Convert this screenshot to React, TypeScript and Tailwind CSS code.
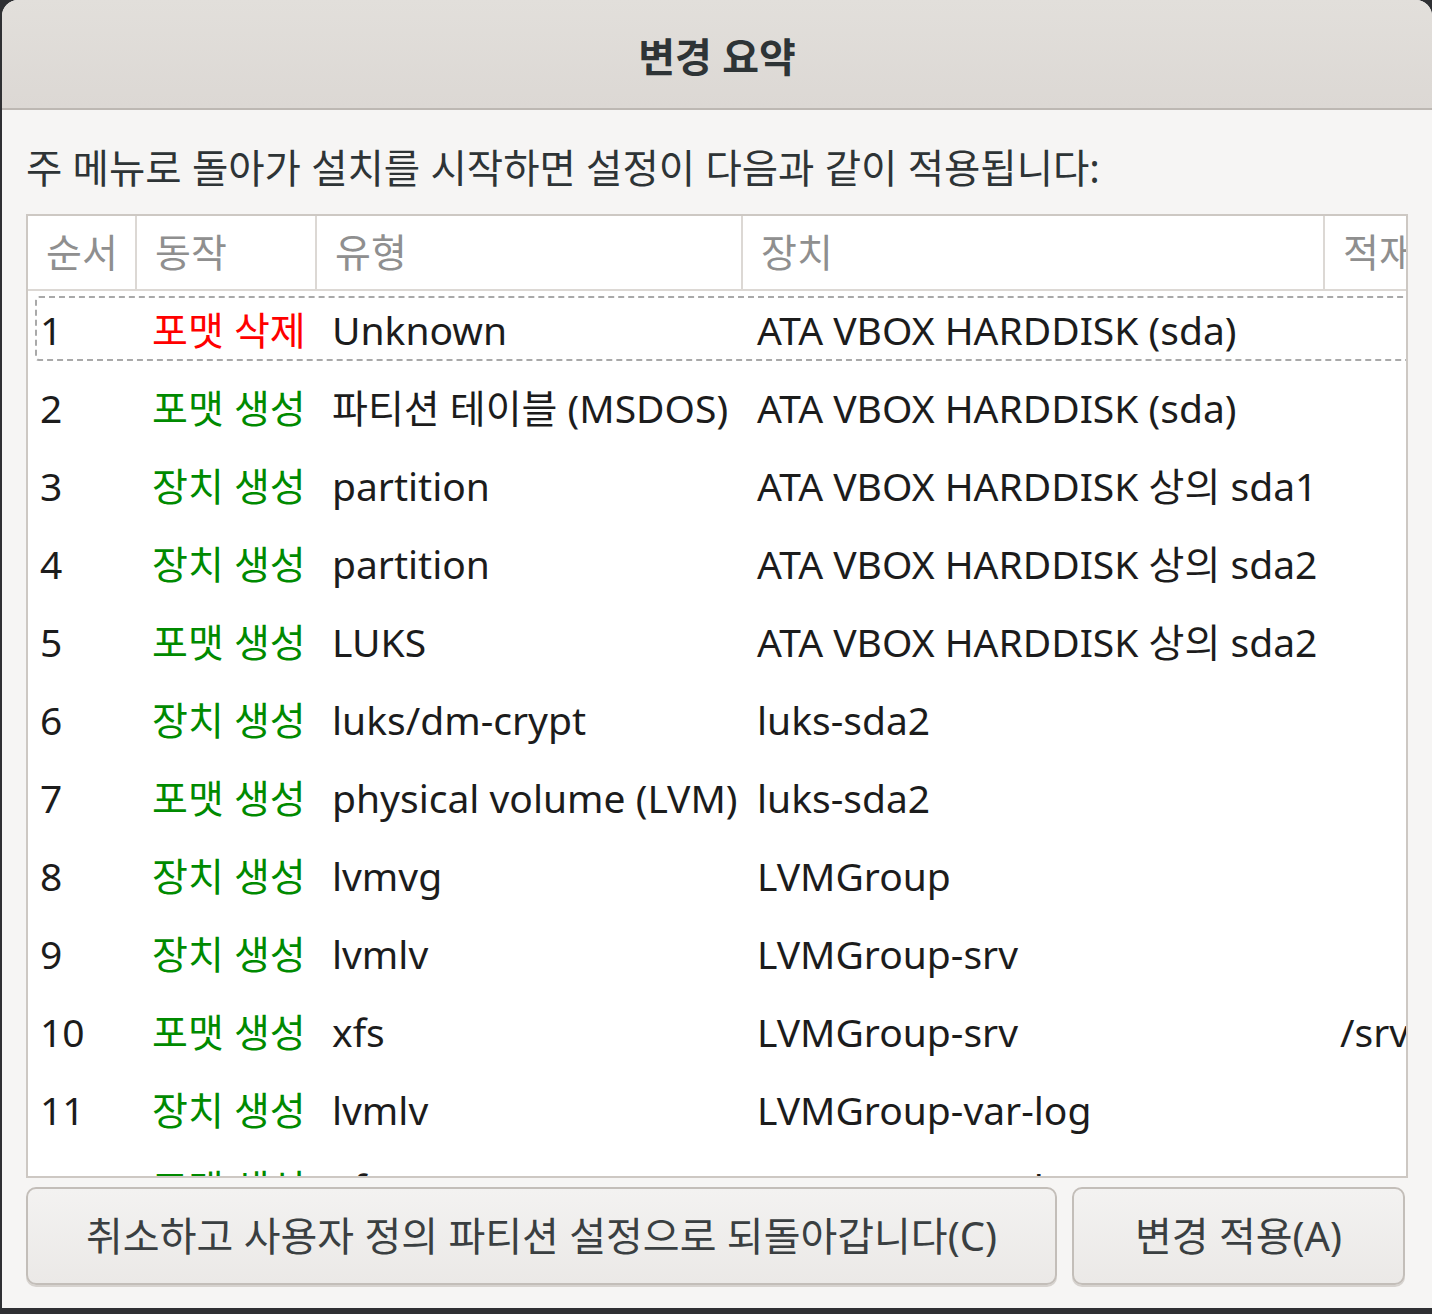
const FONT = '"Noto Sans", "Noto Sans CJK KR", sans-serif';

type Row = {
  n: number;
  action: string;
  kind: "del" | "add";
  type: string;
  device: string;
  mount?: string;
};

const ROWS: Row[] = [
  { n: 1, action: "포맷 삭제", kind: "del", type: "Unknown", device: "ATA VBOX HARDDISK (sda)" },
  { n: 2, action: "포맷 생성", kind: "add", type: "파티션 테이블 (MSDOS)", device: "ATA VBOX HARDDISK (sda)" },
  { n: 3, action: "장치 생성", kind: "add", type: "partition", device: "ATA VBOX HARDDISK 상의 sda1" },
  { n: 4, action: "장치 생성", kind: "add", type: "partition", device: "ATA VBOX HARDDISK 상의 sda2" },
  { n: 5, action: "포맷 생성", kind: "add", type: "LUKS", device: "ATA VBOX HARDDISK 상의 sda2" },
  { n: 6, action: "장치 생성", kind: "add", type: "luks/dm-crypt", device: "luks-sda2" },
  { n: 7, action: "포맷 생성", kind: "add", type: "physical volume (LVM)", device: "luks-sda2" },
  { n: 8, action: "장치 생성", kind: "add", type: "lvmvg", device: "LVMGroup" },
  { n: 9, action: "장치 생성", kind: "add", type: "lvmlv", device: "LVMGroup-srv" },
  { n: 10, action: "포맷 생성", kind: "add", type: "xfs", device: "LVMGroup-srv", mount: "/srv" },
  { n: 11, action: "장치 생성", kind: "add", type: "lvmlv", device: "LVMGroup-var-log" },
  { n: 12, action: "포맷 생성", kind: "add", type: "xfs", device: "LVMGroup-var-log", mount: "/var/log" },
];

function HeaderCell({ label, width, last = false }: { label: string; width: string; last?: boolean }) {
  return (
    <div
      className={`${width} flex h-full shrink-0 items-center overflow-hidden whitespace-nowrap pl-[18px] ${
        last ? "" : "border-r-2 border-[#dcd8d4]"
      }`}
    >
      {label}
    </div>
  );
}

export default function App() {
  return (
    <div
      className="h-[1314px] w-[1432px] overflow-hidden bg-[#2f3033] pb-[6px] pl-[2px]"
      style={{ fontFamily: FONT }}
    >
      <div className="flex h-full flex-col overflow-hidden rounded-t-[16px] bg-[#f6f5f4]">
        {/* title bar */}
        <div className="flex h-[110px] shrink-0 items-center justify-center border-b-2 border-[#bdb8b3] bg-gradient-to-b from-[#e2dfdb] to-[#dcd8d4] pt-[6px]">
          <span className="text-[40px] font-bold text-[#2e3436]">변경 요약</span>
        </div>

        <div className="flex flex-1 flex-col px-[24px]">
          <div className="mt-[35px] text-[39.5px] leading-[46px] text-[#2e3436]">
            주 메뉴로 돌아가 설치를 시작하면 설정이 다음과 같이 적용됩니다:
          </div>

          {/* table */}
          <div className="mt-[23px] flex h-[964px] flex-col overflow-hidden border-2 border-[#cdc8c3] bg-white">
            <div className="flex h-[75px] shrink-0 border-b-2 border-[#dcd8d4] text-[39px] text-[#8f8f8f]">
              <HeaderCell label="순서" width="w-[109px]" />
              <HeaderCell label="동작" width="w-[180px]" />
              <HeaderCell label="유형" width="w-[426px]" />
              <HeaderCell label="장치" width="w-[582px]" />
              <HeaderCell label="적재 지점" width="w-[120px]" last />
            </div>

            <div className="flex-1 overflow-hidden">
              {ROWS.map((r) => (
                <div key={r.n} className="relative flex h-[78px] items-center whitespace-nowrap text-[39px] text-[#1c1c1c]">
                  {r.n === 1 && (
                    <div className="absolute left-[7px] right-[-4px] top-[5px] bottom-[8px] rounded-[4px] border-2 border-dashed border-[#a9a9a9]" />
                  )}
                  <div className="w-[109px] shrink-0 pl-[12px]">{r.n}</div>
                  <div
                    className={`w-[180px] shrink-0 pl-[15px] ${
                      r.kind === "del" ? "text-[#ff0000]" : "text-[#008a00]"
                    }`}
                  >
                    {r.action}
                  </div>
                  <div className="w-[426px] shrink-0 pl-[15px]">{r.type}</div>
                  <div className="w-[582px] shrink-0 pl-[14px]">{r.device}</div>
                  <div className="w-[120px] shrink-0 overflow-hidden pl-[15px]">{r.mount ?? ""}</div>
                </div>
              ))}
            </div>
          </div>

          {/* buttons */}
          <div className="mt-[9px] flex gap-[15px]">
            <button className="h-[98px] w-[1031px] rounded-[10px] border-2 border-[#c3beb9] bg-gradient-to-b from-[#f3f2f1] to-[#ebe9e7] text-[40px] text-[#3a3f41] shadow-[0_2px_0_#d6d2ce]">
              취소하고 사용자 정의 파티션 설정으로 되돌아갑니다(C)
            </button>
            <button className="h-[98px] w-[333px] rounded-[10px] border-2 border-[#c3beb9] bg-gradient-to-b from-[#f3f2f1] to-[#ebe9e7] text-[40px] text-[#3a3f41] shadow-[0_2px_0_#d6d2ce]">
              변경 적용(A)
            </button>
          </div>
        </div>
      </div>
    </div>
  );
}
